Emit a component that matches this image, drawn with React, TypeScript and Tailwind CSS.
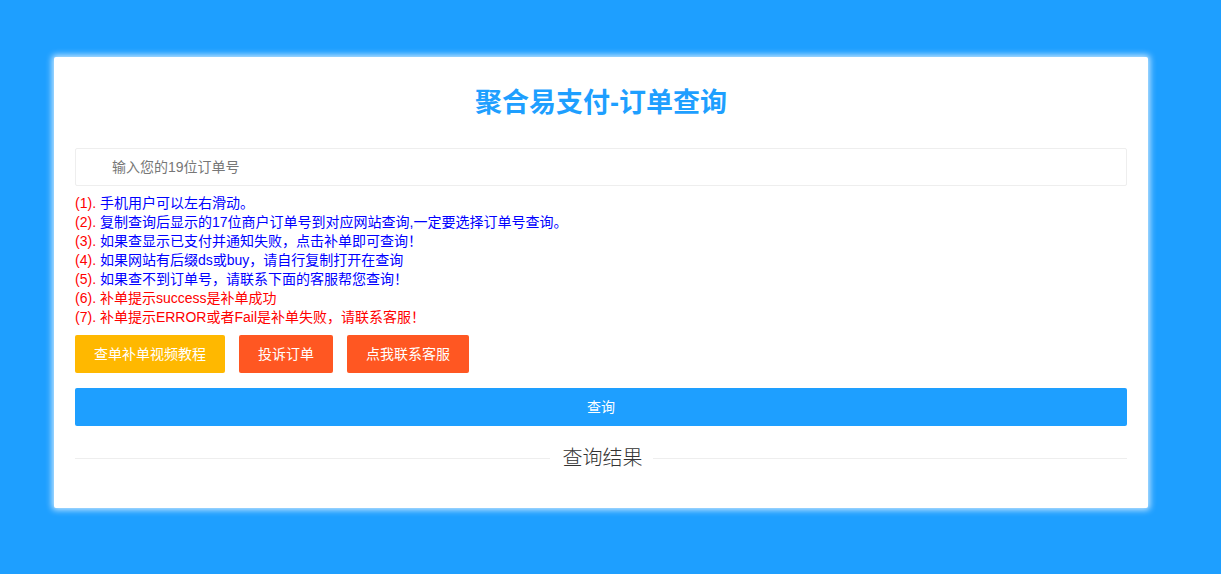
import React from 'react';

const tips: { text: string; red?: boolean }[] = [
  { text: '手机用户可以左右滑动。' },
  { text: '复制查询后显示的17位商户订单号到对应网站查询,一定要选择订单号查询。' },
  { text: '如果查显示已支付并通知失败，点击补单即可查询！' },
  { text: '如果网站有后缀ds或buy，请自行复制打开在查询' },
  { text: '如果查不到订单号，请联系下面的客服帮您查询！' },
  { text: '补单提示success是补单成功', red: true },
  { text: '补单提示ERROR或者Fail是补单失败，请联系客服！', red: true },
];

export default function App() {
  return (
    <div
      className="min-h-[574px] w-full bg-[#1E9FFF] pt-[57px] pb-[67px]"
      style={{ fontFamily: '"Liberation Sans", "Noto Sans CJK SC", sans-serif' }}
    >
      <div className="ml-[54px] w-[1094px] rounded-[2px] bg-white px-[21px] pt-[28px] pb-[36px] shadow-[0_0_6px_2px_rgba(255,255,255,0.75)]">
        {/* Title */}
        <h1 className="text-center text-[27px] leading-[36px] font-bold text-[#1E9FFF]">
          聚合易支付-订单查询
        </h1>

        {/* Order input */}
        <input
          type="text"
          placeholder="输入您的19位订单号"
          className="mt-[27px] block h-[38px] w-full rounded-[2px] border border-[#eee] pl-[36px] text-[14px] text-[#333] outline-none placeholder:text-[#777]"
        />

        {/* Tips */}
        <div className="mt-[8px] text-[14px] leading-[19px]">
          {tips.map((t, i) => (
            <div key={i}>
              <span className="text-[#ff0000]">({i + 1}). </span>
              <span className={t.red ? 'text-[#ff0000]' : 'text-[#0000ff]'}>{t.text}</span>
            </div>
          ))}
        </div>

        {/* Action buttons */}
        <div className="mt-[8px] flex gap-[14px]">
          <button className="h-[38px] rounded-[2px] bg-[#FFB800] px-[19px] text-[14px] text-white">
            查单补单视频教程
          </button>
          <button className="h-[38px] rounded-[2px] bg-[#FF5722] px-[19px] text-[14px] text-white">
            投诉订单
          </button>
          <button className="h-[38px] rounded-[2px] bg-[#FF5722] px-[19px] text-[14px] text-white">
            点我联系客服
          </button>
        </div>

        {/* Query */}
        <button className="mt-[15px] block h-[38px] w-full rounded-[2px] bg-[#1E9FFF] text-[14px] text-white">
          查询
        </button>

        {/* Result divider */}
        <div className="mt-[18px] flex items-center">
          <div className="h-px flex-1 bg-[#eee]" />
          <span className="pr-[10px] pl-[13px] text-[20px] leading-[28px] font-light text-[#333]">查询结果</span>
          <div className="h-px flex-1 bg-[#eee]" />
        </div>
      </div>
    </div>
  );
}
